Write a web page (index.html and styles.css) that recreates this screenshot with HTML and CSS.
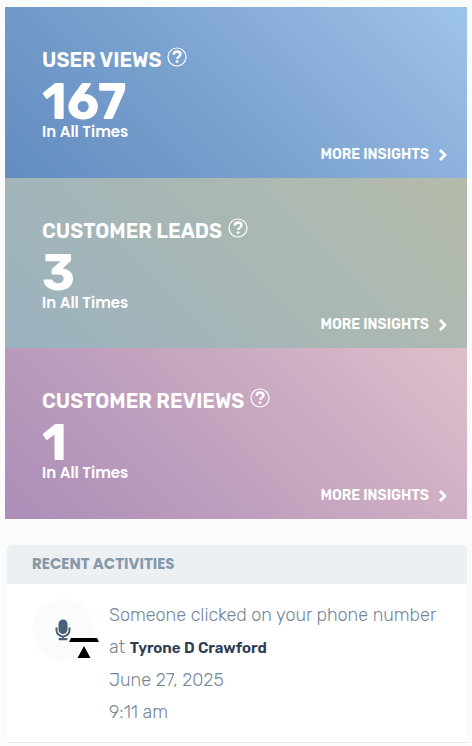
FILE: index.html
```html
<!DOCTYPE html>
<html lang="en">
<head>
<meta charset="utf-8">
<meta name="viewport" content="width=device-width, initial-scale=1">
<title>Insights</title>
<link rel="stylesheet" href="styles.css">
</head>
<body>
<svg class="sprite" aria-hidden="true">
  <symbol id="help" viewBox="0 0 20 20">
    <circle cx="10" cy="10" r="9" fill="none" stroke="currentColor" stroke-width="1.2"/>
    <path d="M6.700 7.700C6.800 5.700 8.100 4.500 10.100 4.500c2 0 3.400 1.100 3.400 2.800 0 2.400-3.300 2.300-3.300 4.800" fill="none" stroke="currentColor" stroke-width="2.400"/>
    <circle cx="10.100" cy="14.600" r="1.400" fill="currentColor"/>
  </symbol>
  <symbol id="chevron" viewBox="0 0 8 12">
    <path d="M1 1 6 6l-5 5" fill="none" stroke="currentColor" stroke-width="2.800"/>
  </symbol>
</svg>
<main class="page">
  <div class="stats">
    <section class="stat stat-views">
      <h2 class="stat-title">USER VIEWS <button class="help" type="button" aria-label="About user views"><svg><use href="#help"/></svg></button></h2>
      <p class="stat-value">167</p>
      <p class="stat-period">In All Times</p>
      <a class="more" href="#">MORE INSIGHTS <svg><use href="#chevron"/></svg></a>
    </section>
    <section class="stat stat-leads">
      <h2 class="stat-title">CUSTOMER LEADS <button class="help" type="button" aria-label="About customer leads"><svg><use href="#help"/></svg></button></h2>
      <p class="stat-value">3</p>
      <p class="stat-period">In All Times</p>
      <a class="more" href="#">MORE INSIGHTS <svg><use href="#chevron"/></svg></a>
    </section>
    <section class="stat stat-reviews">
      <h2 class="stat-title">CUSTOMER REVIEWS <button class="help" type="button" aria-label="About customer reviews"><svg><use href="#help"/></svg></button></h2>
      <p class="stat-value">1</p>
      <p class="stat-period">In All Times</p>
      <a class="more" href="#">MORE INSIGHTS <svg><use href="#chevron"/></svg></a>
    </section>
  </div>
  <section class="panel">
    <h2 class="panel-title">RECENT ACTIVITIES</h2>
    <article class="activity">
      <div class="avatar">
        <svg class="mic" viewBox="0 0 16 22" aria-hidden="true">
          <rect x="3.500" y="0.500" width="9" height="14.500" rx="4.500" fill="#4a5f78"/>
          <path d="M1.500 8.500v2.700a6.500 6.200 0 0 0 13 0V8.500M8 17.500V20" fill="none" stroke="#4a5f78" stroke-width="2"/>
          <rect x="3.500" y="19" width="9" height="2.300" rx="1" fill="#4a5f78"/>
        </svg>
        <svg class="badge" viewBox="0 0 32 22" aria-hidden="true">
          <path d="M3 1h26l2 4H1zM16 9l6.500 12h-13z"/>
        </svg>
      </div>
      <div class="activity-text">
        <p>Someone clicked on your phone number at <strong>Tyrone D Crawford</strong></p>
        <p>June 27, 2025</p>
        <p>9:11 am</p>
      </div>
    </article>
  </section>
</main>
</body>
</html>
```
FILE: styles.css
```css
* {
  box-sizing: border-box;
}

body {
  margin: 0;
  background: #fafcfc;
  font-family: Rubik, Roboto, sans-serif;
}

h2,
p {
  margin: 0;
}

.sprite {
  display: none;
}

.page {
  padding: 7px 5px 0;
}

.stats {
  display: grid;
  grid-auto-rows: 1fr;
  min-height: 512px;
}

.stat {
  display: flex;
  flex-direction: column;
  padding: 40px 20px 12px 37px;
  color: #fff;
}

.stat-views {
  background: linear-gradient(45deg, #638cc1, #78a0cd 40%, #88add9 65%, #9dc4ea);
}

.stat-leads {
  background: linear-gradient(45deg, #9bb2bf, #a8b7b5 50%, #b5bbab);
}

.stat-reviews {
  background: linear-gradient(45deg, #ab8db8, #c4a4bf 50%, #dfbecb);
}

.stat-title {
  display: flex;
  gap: 6px;
  font-size: 20px;
  font-weight: 600;
  line-height: 26px;
}

.help {
  display: flex;
  width: 20px;
  height: 20px;
  padding: 0;
  border: 0;
  background: none;
  color: inherit;
}

.help svg {
  width: 20px;
  height: 20px;
}

.stat-value {
  margin-top: 8px;
  font-family: Rubik, Inter, sans-serif;
  font-size: 50px;
  font-weight: 700;
  line-height: 42px;
}

.stat-period {
  font-family: Poppins, Inter, sans-serif;
  font-size: 15px;
  font-weight: 600;
  line-height: 18px;
}

.more {
  display: flex;
  align-items: center;
  align-self: flex-end;
  gap: 10px;
  margin-top: auto;
  color: inherit;
  font-size: 14px;
  font-weight: 600;
  line-height: 22px;
  text-decoration: none;
}

.more svg {
  width: 8px;
  height: 12px;
}

.panel {
  margin: 26px 0 0 2px;
  border-bottom: 1px solid #e4e8eb;
  border-radius: 5px 5px 0 0;
  background: #fff;
  overflow: hidden;
}

.panel-title {
  padding: 9px 25px 10px;
  background: #ecf0f3;
  color: #8798aa;
  font-family: Poppins, "Open Sans", sans-serif;
  font-size: 15px;
  font-weight: 700;
  line-height: 20px;
}

.activity {
  display: flex;
  gap: 15px;
  padding: 15px 20px 14px 25px;
}

.avatar {
  position: relative;
  display: grid;
  flex: none;
  place-items: center;
  width: 62px;
  height: 62px;
  border-radius: 50%;
  background: #fafcfc;
}

.mic {
  width: 16px;
  height: 22px;
}

.badge {
  position: absolute;
  right: -6px;
  bottom: 2px;
  width: 32px;
  height: 22px;
}

.activity-text {
  color: #74869a;
  font-size: 18px;
  font-weight: 300;
  line-height: 32px;
}

.activity-text strong {
  color: #2e3d52;
  font-size: 15px;
  font-weight: 600;
}
```
